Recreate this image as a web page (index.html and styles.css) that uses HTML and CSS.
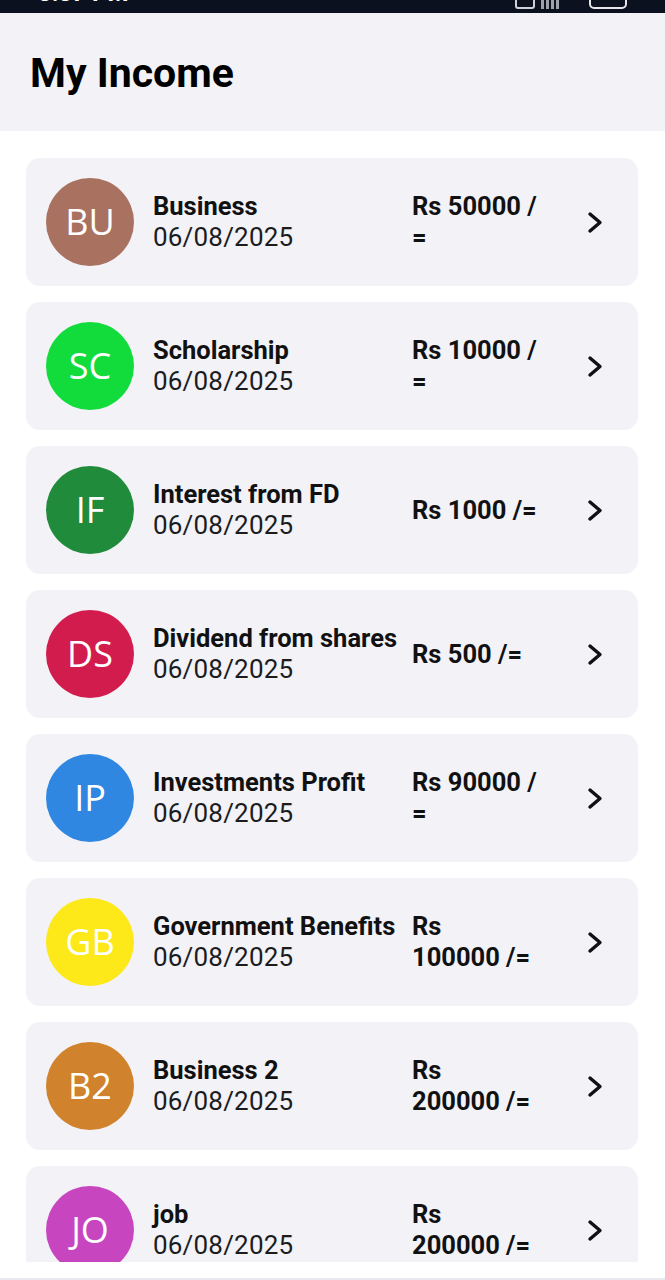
FILE: index.html
```html
<!DOCTYPE html>
<html lang="en">
<head>
<meta charset="utf-8">
<title>My Income</title>
<link rel="stylesheet" href="styles.css">
</head>
<body>
<div class="app">
  <div class="status-bar">
    <span class="status-time">3:37 PM</span>
    <span class="status-right">
      <span class="status-box"></span>
      <span class="status-signal"><i></i><i></i><i></i><i></i></span>
      <span class="status-bat"></span>
    </span>
  </div>
  <header class="header">
    <h1 class="title">My Income</h1>
  </header>
  <main class="list">
    <div class="card">
      <div class="avatar av-bu">BU</div>
      <div class="info"><div class="name">Business</div><div class="date">06/08/2025</div></div>
      <div class="amount">Rs 50000 /<br>=</div>
      <svg class="chev" viewBox="0 0 24 24"><polyline points="8,4 18,12.5 8,21"/></svg>
    </div>
    <div class="card">
      <div class="avatar av-sc">SC</div>
      <div class="info"><div class="name">Scholarship</div><div class="date">06/08/2025</div></div>
      <div class="amount">Rs 10000 /<br>=</div>
      <svg class="chev" viewBox="0 0 24 24"><polyline points="8,4 18,12.5 8,21"/></svg>
    </div>
    <div class="card">
      <div class="avatar av-if">IF</div>
      <div class="info"><div class="name">Interest from FD</div><div class="date">06/08/2025</div></div>
      <div class="amount">Rs 1000 /=</div>
      <svg class="chev" viewBox="0 0 24 24"><polyline points="8,4 18,12.5 8,21"/></svg>
    </div>
    <div class="card">
      <div class="avatar av-ds">DS</div>
      <div class="info"><div class="name">Dividend from shares</div><div class="date">06/08/2025</div></div>
      <div class="amount">Rs 500 /=</div>
      <svg class="chev" viewBox="0 0 24 24"><polyline points="8,4 18,12.5 8,21"/></svg>
    </div>
    <div class="card">
      <div class="avatar av-ip">IP</div>
      <div class="info"><div class="name">Investments Profit</div><div class="date">06/08/2025</div></div>
      <div class="amount">Rs 90000 /<br>=</div>
      <svg class="chev" viewBox="0 0 24 24"><polyline points="8,4 18,12.5 8,21"/></svg>
    </div>
    <div class="card">
      <div class="avatar av-gb">GB</div>
      <div class="info"><div class="name">Government Benefits</div><div class="date">06/08/2025</div></div>
      <div class="amount">Rs<br>100000 /=</div>
      <svg class="chev" viewBox="0 0 24 24"><polyline points="8,4 18,12.5 8,21"/></svg>
    </div>
    <div class="card">
      <div class="avatar av-b2">B2</div>
      <div class="info"><div class="name">Business 2</div><div class="date">06/08/2025</div></div>
      <div class="amount">Rs<br>200000 /=</div>
      <svg class="chev" viewBox="0 0 24 24"><polyline points="8,4 18,12.5 8,21"/></svg>
    </div>
    <div class="card">
      <div class="avatar av-jo">JO</div>
      <div class="info"><div class="name">job</div><div class="date">06/08/2025</div></div>
      <div class="amount">Rs<br>200000 /=</div>
      <svg class="chev" viewBox="0 0 24 24"><polyline points="8,4 18,12.5 8,21"/></svg>
    </div>
  </main>
  <div class="bottom-space"></div>
  <div class="bottom-bar"></div>
</div>
</body>
</html>
```

FILE: styles.css
```css
* { box-sizing: border-box; }
html, body { margin: 0; padding: 0; background: #ffffff; }
body { font-family: Roboto, "Noto Sans", "Liberation Sans", sans-serif; color: #111; }

.app {
  width: 665px;
  height: 1280px;
  display: flex;
  flex-direction: column;
  overflow: hidden;
}

.status-bar {
  height: 13px;
  flex: none;
  background: #0c1120;
  display: flex;
  justify-content: space-between;
  align-items: flex-end;
  padding: 0 38px 0 38px;
  overflow: hidden;
  color: #ffffff;
}
.status-time {
  font-size: 24px;
  font-weight: 700;
  line-height: 1;
  margin-bottom: 8px;
}
.status-right { display: flex; align-items: flex-end; margin-bottom: 4px; }
.status-box { width: 20px; height: 12px; border: 2px solid #cfd2d8; border-radius: 3px; margin-right: 6px; }
.status-signal { display: flex; align-items: flex-end; gap: 2px; margin-right: 30px; }
.status-signal i { display: block; width: 3px; height: 12px; background: #9ea2ab; }
.status-bat { width: 38px; height: 14px; border: 2px solid #e4e6ea; border-radius: 5px; }

.header {
  height: 118px;
  flex: none;
  background: #f2f2f7;
  padding: 0 30px;
  display: flex;
  align-items: center;
}
.title {
  margin: 0;
  font-size: 41px;
  font-weight: 700;
  color: #000;
  line-height: 1;
  padding-top: 3px;
}

.list {
  flex: 1;
  min-height: 0;
  overflow: hidden;
  padding: 27px 27px 0 26px;
  display: flex;
  flex-direction: column;
  gap: 16px;
}

.card {
  flex: none;
  height: 128px;
  background: #f2f2f7;
  border-radius: 14px;
  display: flex;
  align-items: center;
  padding: 0 32px 0 20px;
}

.avatar {
  width: 88px;
  height: 88px;
  flex: none;
  border-radius: 50%;
  display: flex;
  align-items: center;
  justify-content: center;
  color: #ffffff;
  font-family: "Open Sans", "Noto Sans", sans-serif;
  font-size: 36px;
  font-weight: 400;
  padding-bottom: 2px;
}
.av-bu { background: #a9715f; }
.av-sc { background: #12dc3c; }
.av-if { background: #1f8b3b; }
.av-ds { background: #d31c4e; }
.av-ip { background: #2f87e2; }
.av-gb { background: #fde819; }
.av-b2 { background: #d0822c; }
.av-jo { background: #c746c0; }

.info {
  flex: 1;
  min-width: 0;
  margin-left: 19px;
  display: flex;
  flex-direction: column;
}
.name {
  font-size: 25.5px;
  font-weight: 700;
  line-height: 31px;
  color: #111;
  white-space: nowrap;
}
.date {
  font-size: 26px;
  font-weight: 400;
  line-height: 31px;
  color: #1c1c1e;
  letter-spacing: 0.2px;
}

.amount {
  width: 170px;
  flex: none;
  font-size: 25.5px;
  font-weight: 700;
  line-height: 31px;
  color: #111;
  white-space: nowrap;
}

.chev {
  width: 24px;
  height: 24px;
  flex: none;
}
.chev polyline {
  fill: none;
  stroke: #111;
  stroke-width: 3.4;
  stroke-linecap: round;
  stroke-linejoin: round;
}

.bottom-space { height: 16px; flex: none; background: #ffffff; }
.bottom-bar { height: 2px; flex: none; background: #e8e8ee; }
```
